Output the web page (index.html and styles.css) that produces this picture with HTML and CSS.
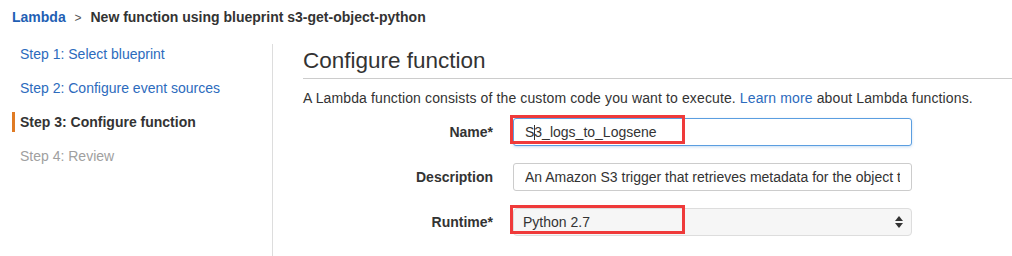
FILE: index.html
```html
<!DOCTYPE html>
<html lang="en">
<head>
  <meta charset="UTF-8">
  <title>Lambda - New function</title>
  <link rel="stylesheet" href="styles.css">
</head>
<body>
  <div class="crumbs">
    <a href="#" class="crumb-link">Lambda</a>
    <span class="crumb-sep">&gt;</span>
    <span class="crumb-title">New function using blueprint s3-get-object-python</span>
  </div>

  <div class="layout">
    <ul class="steps">
      <li class="step"><a href="#">Step 1: Select blueprint</a></li>
      <li class="step"><a href="#">Step 2: Configure event sources</a></li>
      <li class="step current">Step 3: Configure function</li>
      <li class="step disabled">Step 4: Review</li>
    </ul>

    <div class="content">
      <h2 class="title">Configure function</h2>
      <p class="intro">A Lambda function consists of the custom code you want to execute. <a href="#">Learn more</a> about Lambda functions.</p>

      <form class="fields" autocomplete="off">
        <label class="field-label">Name*</label>
        <div class="field">
          <input type="text" class="text-input focused" value="S3_logs_to_Logsene">
          <span class="caret"></span>
          <span class="mark"></span>
        </div>

        <label class="field-label">Description</label>
        <div class="field">
          <input type="text" class="text-input" value="An Amazon S3 trigger that retrieves metadata for the object that has been updated.">
        </div>

        <label class="field-label">Runtime*</label>
        <div class="field">
          <div class="select-box">
            <span>Python 2.7</span>
            <svg class="arrows" width="8" height="12" viewBox="0 0 8 12">
              <path d="M4 0 L8 5 L0 5 Z" fill="#333"/>
              <path d="M0 7 L8 7 L4 12 Z" fill="#333"/>
            </svg>
          </div>
          <span class="mark"></span>
        </div>
      </form>
    </div>
  </div>
</body>
</html>
```

FILE: styles.css
```css
body {
  margin: 0;
  font-family: "Liberation Sans", Arial, sans-serif;
  font-size: 14px;
  color: #333;
  background: #fff;
}
a {
  color: #2c6bbd;
  text-decoration: none;
}
.crumbs {
  height: 34px;
  line-height: 34px;
  padding-left: 12px;
  font-size: 14px;
  font-weight: bold;
}
.crumb-link {
  color: #1f5fb4;
}
.crumb-sep {
  display: inline-block;
  margin: 0 5px 0 5px;
  font-weight: normal;
  font-size: 12px;
  color: #555;
}
.crumb-title {
  color: #333;
}
.layout {
  display: flex;
  margin-top: 10px;
  height: 212px;
}
.steps {
  list-style: none;
  margin: 0;
  padding: 0 0 0 12px;
  width: 260px;
  border-right: 1px solid #ddd;
  display: flex;
  flex-direction: column;
  gap: 14px;
}
.step {
  line-height: 20px;
  padding-left: 5px;
  border-left: 3px solid transparent;
}
.step.current {
  font-weight: bold;
  color: #333;
  border-left-color: #e07b24;
}
.step.disabled {
  color: #a0a0a0;
}
.content {
  flex: 1;
  padding-left: 30px;
}
.title {
  margin: 0;
  padding: 5px 0;
  line-height: 24px;
  font-size: 22.5px;
  font-weight: normal;
  color: #333;
  border-bottom: 1px solid #ccc;
}
.intro {
  margin: 10px 0 0;
  line-height: 18px;
  letter-spacing: 0.12px;
}
.fields {
  display: grid;
  grid-template-columns: 190px 399px;
  column-gap: 20px;
  row-gap: 17px;
  margin-top: 11px;
}
.field-label {
  text-align: right;
  font-weight: bold;
  line-height: 28px;
  color: #333;
}
.field {
  position: relative;
  height: 28px;
}
.text-input {
  box-sizing: border-box;
  width: 100%;
  height: 28px;
  padding: 0 11px;
  border: 1px solid #ccc;
  border-radius: 3px;
  font-family: inherit;
  font-size: 14px;
  color: #333;
  outline: none;
}
.text-input.focused {
  border-color: #5b9ee0;
  box-shadow: 0 1px 3px rgba(91, 158, 224, 0.35);
}
.caret {
  position: absolute;
  left: 21px;
  top: 7px;
  width: 1px;
  height: 15px;
  background: #333;
}
.select-box {
  box-sizing: border-box;
  height: 28px;
  display: flex;
  align-items: center;
  justify-content: space-between;
  padding: 0 8px 0 9px;
  border: 1px solid #ddd;
  border-radius: 4px;
  background: #f6f6f6;
  color: #333;
}
.mark {
  position: absolute;
  left: -3px;
  top: -3px;
  width: 169px;
  height: 23px;
  border: 3px solid #ef3a3a;
}
```
